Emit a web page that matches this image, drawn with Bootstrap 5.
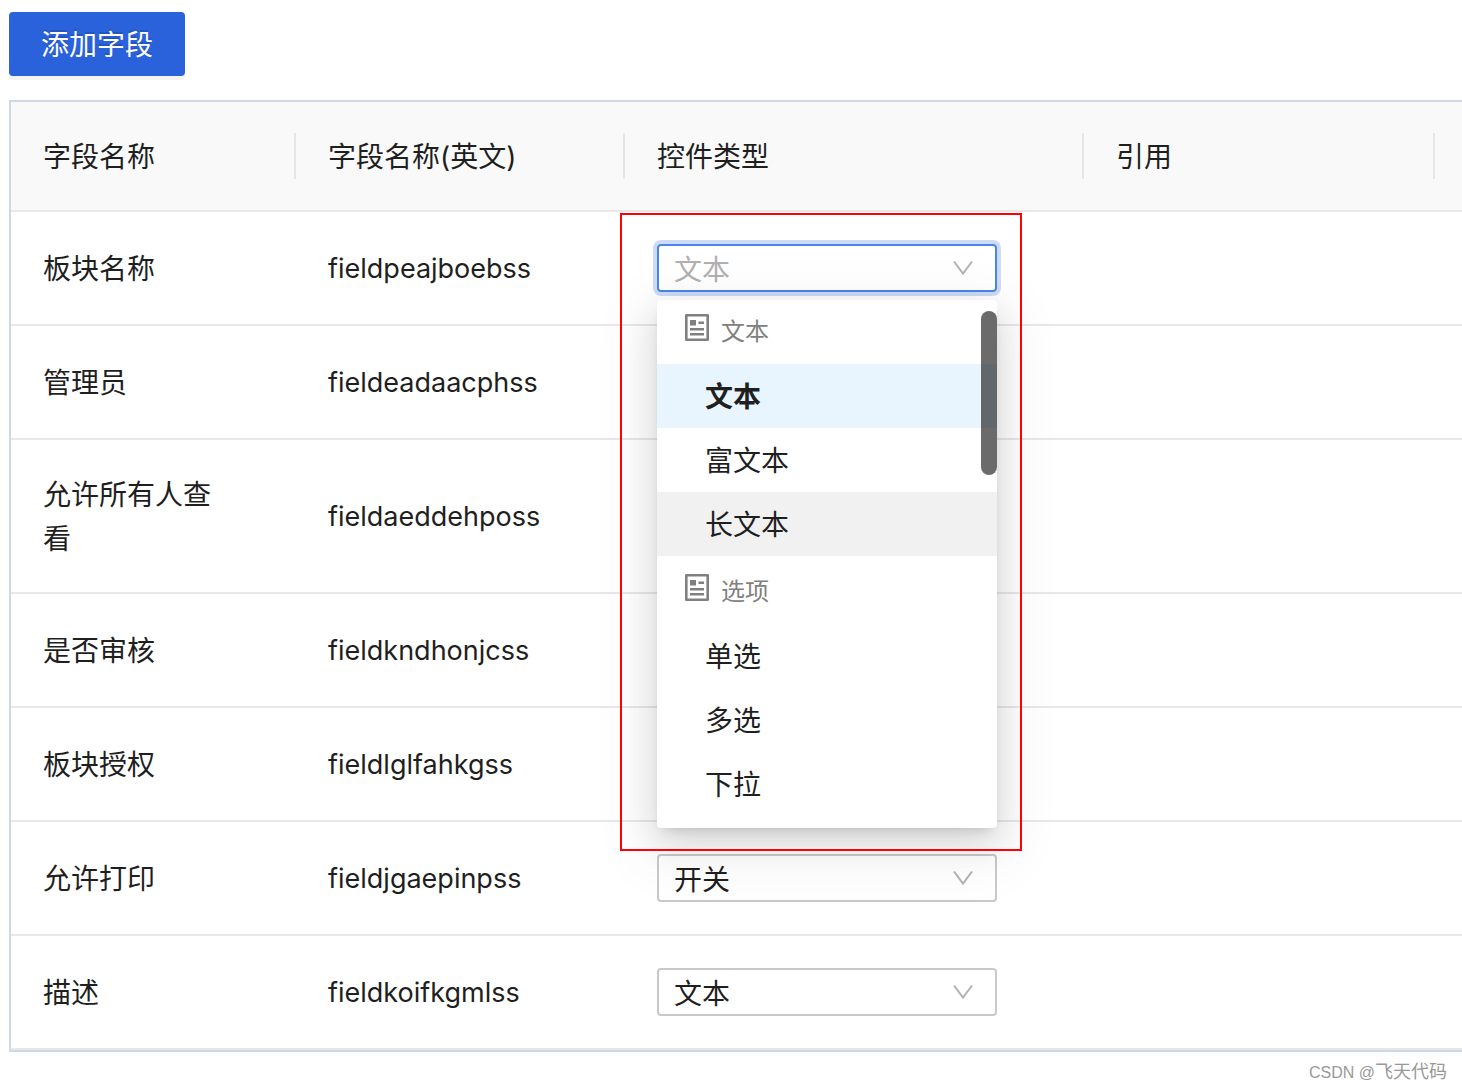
<!DOCTYPE html>
<html lang="zh-CN">
<head>
<meta charset="utf-8">
<meta name="viewport" content="width=device-width, initial-scale=1">
<title>字段设置</title>
<link rel="stylesheet" href="https://cdn.jsdelivr.net/npm/bootstrap@5.3.0/dist/css/bootstrap.min.css">
<style>
  body { font-family: Inter, "Noto Sans CJK SC", sans-serif; font-size: 28px; line-height: 44px; color: #1f1f1f; background: #fff; padding: 12px 0 0 9px; }
  .btn-add { --bs-btn-bg: #2962da; --bs-btn-border-color: #2962da; --bs-btn-color: #fff; --bs-btn-border-radius: 4px; --bs-btn-font-size: 28px; --bs-btn-line-height: 44px; padding: 9px 30px 7px; border-width: 2px; box-shadow: 0 4px 0 rgba(0,0,0,.045); text-shadow: 0 -2px 0 rgba(0,0,0,.12); }
  .field-frame { border: 2px solid #ced9e4; border-right: 0; }
  .field-table { table-layout: fixed; --bs-table-color: #1f1f1f; --bs-table-bg: transparent; font-weight: 400; }
  .field-table > :not(caption) > * > * { padding: 33px 32px 31px; border-bottom: 2px solid #e8e8e8; vertical-align: middle; }
  .field-table > :not(caption) > * > .type-cell { padding: 32px; }
  .field-table th { font-weight: 400; background: #f9f9f9 linear-gradient(#e6e6e6, #e6e6e6) no-repeat right center / 2px 46px; }
  .field-table th:last-child { background-image: none; }
  .field-table td { height: 114px; }
  .field-table tr > :first-child { padding-right: 64px; }
  .w-name { width: 285px; } .w-key { width: 329px; } .w-type { width: 459px; } .w-ref { width: 351px; }
  .field-en { font-size: 27px; }
  .type-box { width: 340px; }
  .type-box .form-select { height: 48px; padding: 2px 60px 0 15px; border: 2px solid #c9c9c9; border-radius: 4px; color: #1f1f1f; font-size: 28px; line-height: 44px; background: transparent url("data:image/svg+xml,%3Csvg xmlns='http://www.w3.org/2000/svg' viewBox='0 0 20 16'%3E%3Cpath d='M1 1.5 10 13.5 19 1.5' fill='none' stroke='%23b2b2b2' stroke-width='2'/%3E%3C/svg%3E") no-repeat right 22px center / 20px 16px; }
  .type-box.is-open .form-select { border-color: #4a86e8; color: #b0b0b0; box-shadow: 0 0 0 4px #cedbf7; }
  .type-menu { top: 56px; left: 0; z-index: 10; width: 100%; height: 528px; border-radius: 4px; background: #fff; box-shadow: 0 6px 12px -8px rgba(0,0,0,.24), 0 12px 32px rgba(0,0,0,.12), 0 18px 56px 16px rgba(0,0,0,.06); }
  .type-list { height: 100%; border-radius: 4px; }
  .type-list ul { margin-top: -4px; }
  .type-group { height: 68px; padding: 0 26px 4px; gap: 10px; font-size: 24px; color: #808080; }
  .type-group svg { width: 28px; height: 28px; margin-bottom: 2px; }
  .type-group span { padding-top: 7px; }
  .type-item { height: 64px; padding: 11px 48px 9px; border: 0; background: none; color: #1f1f1f; }
  .type-item.is-chosen { background: #e9f5fe; font-weight: 600; }
  .type-item.is-hovered { background: #f1f1f1; }
  .type-thumb { top: 11px; right: 0; width: 16px; height: 164px; background: rgba(0,0,0,.58); }
  .callout-frame { top: -31px; right: -25px; bottom: -559px; left: -37px; z-index: 11; border: 2px solid #fb0207; pointer-events: none; }
  .credit { padding: 6px 15px 0 0; font: 18px/28px "Liberation Sans", "Noto Sans CJK SC", sans-serif; color: #999; }
  .credit-site { font-size: 16px; }
</style>
<script src="https://cdn.jsdelivr.net/npm/bootstrap@5.3.0/dist/js/bootstrap.bundle.min.js" defer></script>
</head>
<body>
<svg class="d-none" aria-hidden="true">
  <symbol id="form-icon" viewBox="0 0 28 28">
    <path d="M3.300 2.300H24.700V26.700H3.300Z" fill="none" stroke="#808080" stroke-width="2.600" stroke-linejoin="round"/>
    <path d="M7 7h6v5.500H7zM15.500 8.500h5.500v2.500h-5.500zM7 15h14v2.500H7zM7 20h14v2.500H7z" fill="#808080"/>
  </symbol>
</svg>
<main>
  <button type="button" class="btn btn-add d-block mb-4">添加字段</button>
  <div class="field-frame">
    <table class="table field-table mb-0">
      <colgroup><col class="w-name"><col class="w-key"><col class="w-type"><col class="w-ref"><col></colgroup>
      <thead>
        <tr><th scope="col">字段名称</th><th scope="col">字段名称(英文)</th><th scope="col">控件类型</th><th scope="col">引用</th><th class="p-0"></th></tr>
      </thead>
      <tbody>
        <tr>
          <td>板块名称</td><td class="field-en">fieldpeajboebss</td>
          <td class="type-cell">
            <div class="type-box is-open position-relative">
              <select class="form-select" aria-label="板块名称"><option>文本</option></select>
              <div class="type-menu position-absolute">
                <div class="type-list overflow-hidden">
                  <ul class="list-unstyled mb-0">
                    <li class="type-group d-flex align-items-center"><svg aria-hidden="true"><use href="#form-icon"/></svg><span>文本</span></li>
                    <li><button type="button" class="type-item is-chosen d-block w-100 text-start">文本</button></li>
                    <li><button type="button" class="type-item d-block w-100 text-start">富文本</button></li>
                    <li><button type="button" class="type-item is-hovered d-block w-100 text-start">长文本</button></li>
                    <li class="type-group d-flex align-items-center"><svg aria-hidden="true"><use href="#form-icon"/></svg><span>选项</span></li>
                    <li><button type="button" class="type-item d-block w-100 text-start">单选</button></li>
                    <li><button type="button" class="type-item d-block w-100 text-start">多选</button></li>
                    <li><button type="button" class="type-item d-block w-100 text-start">下拉</button></li>
                  </ul>
                </div>
                <div class="type-thumb position-absolute rounded-pill"></div>
              </div>
              <div class="callout-frame position-absolute"></div>
            </div>
          </td>
          <td></td><td class="p-0"></td>
        </tr>
        <tr><td>管理员</td><td class="field-en">fieldeadaacphss</td><td></td><td></td><td class="p-0"></td></tr>
        <tr><td>允许所有人查看</td><td class="field-en">fieldaeddehposs</td><td></td><td></td><td class="p-0"></td></tr>
        <tr><td>是否审核</td><td class="field-en">fieldkndhonjcss</td><td></td><td></td><td class="p-0"></td></tr>
        <tr><td>板块授权</td><td class="field-en">fieldlglfahkgss</td><td></td><td></td><td class="p-0"></td></tr>
        <tr>
          <td>允许打印</td><td class="field-en">fieldjgaepinpss</td>
          <td class="type-cell"><div class="type-box"><select class="form-select" aria-label="允许打印"><option>开关</option></select></div></td>
          <td></td><td class="p-0"></td>
        </tr>
        <tr>
          <td>描述</td><td class="field-en">fieldkoifkgmlss</td>
          <td class="type-cell"><div class="type-box"><select class="form-select" aria-label="描述"><option>文本</option></select></div></td>
          <td></td><td class="p-0"></td>
        </tr>
      </tbody>
    </table>
  </div>
</main>
<footer class="credit text-end"><span class="credit-site">CSDN @</span>飞天代码</footer>
</body>
</html>
